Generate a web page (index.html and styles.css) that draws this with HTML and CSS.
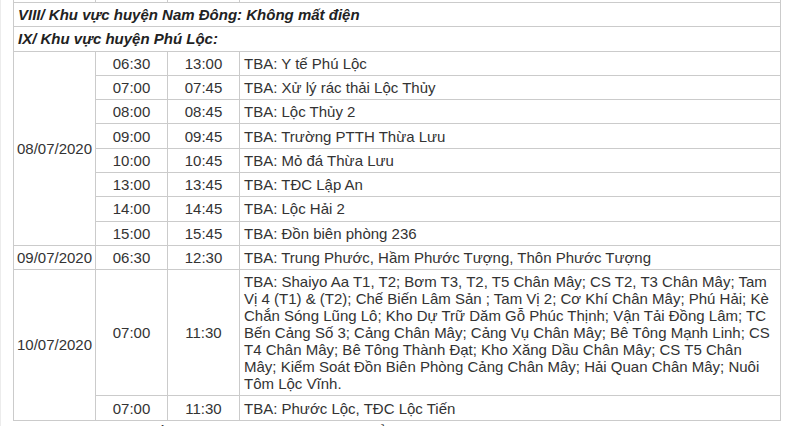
FILE: index.html
```html
<!DOCTYPE html>
<html lang="vi">
<head>
<meta charset="utf-8">
<title>Lịch cắt điện</title>
<link rel="stylesheet" href="styles.css">
</head>
<body>
<div class="page">
  <table class="sched">
    <colgroup>
      <col class="c-date">
      <col class="c-start">
      <col class="c-end">
      <col class="c-place">
    </colgroup>
    <tbody>
      <tr class="stub"><td></td><td></td><td></td><td></td></tr>
      <tr><td colspan="4" class="section">VIII/ Khu vực huyện Nam Đông: Không mất điện</td></tr>
      <tr><td colspan="4" class="section">IX/ Khu vực huyện Phú Lộc:</td></tr>
      <tr><td rowspan="8" class="date">08/07/2020</td><td class="time">06:30</td><td class="time">13:00</td><td>TBA: Y tế Phú Lộc</td></tr>
      <tr><td class="time">07:00</td><td class="time">07:45</td><td>TBA: Xử lý rác thải Lộc Thủy</td></tr>
      <tr><td class="time">08:00</td><td class="time">08:45</td><td>TBA: Lộc Thủy 2</td></tr>
      <tr><td class="time">09:00</td><td class="time">09:45</td><td>TBA: Trường PTTH Thừa Lưu</td></tr>
      <tr><td class="time">10:00</td><td class="time">10:45</td><td>TBA: Mỏ đá Thừa Lưu</td></tr>
      <tr><td class="time">13:00</td><td class="time">13:45</td><td>TBA: TĐC Lập An</td></tr>
      <tr><td class="time">14:00</td><td class="time">14:45</td><td>TBA: Lộc Hải 2</td></tr>
      <tr><td class="time">15:00</td><td class="time">15:45</td><td>TBA: Đồn biên phòng 236</td></tr>
      <tr><td class="date">09/07/2020</td><td class="time">06:30</td><td class="time">12:30</td><td>TBA: Trung Phước, Hầm Phước Tượng, Thôn Phước Tượng</td></tr>
      <tr><td rowspan="2" class="date">10/07/2020</td><td class="time">07:00</td><td class="time">11:30</td><td>TBA: Shaiyo Aa T1, T2; Bơm T3, T2, T5 Chân Mây; CS T2, T3 Chân Mây; Tam Vị 4 (T1) &amp; (T2); Chế Biến Lâm Sản ; Tam Vị 2; Cơ Khí Chân Mây; Phú Hải; Kè Chắn Sóng Lũng Lô; Kho Dự Trữ Dăm Gỗ Phúc Thịnh; Vận Tải Đồng Lâm; TC Bến Cảng Số 3; Cảng Chân Mây; Cảng Vụ Chân Mây; Bê Tông Mạnh Linh; CS T4 Chân Mây; Bê Tông Thành Đạt; Kho Xăng Dầu Chân Mây; CS T5 Chân Mây; Kiểm Soát Đồn Biên Phòng Cảng Chân Mây; Hải Quan Chân Mây; Nuôi Tôm Lộc Vĩnh.</td></tr>
      <tr><td class="time">07:00</td><td class="time">11:30</td><td>TBA: Phước Lộc, TĐC Lộc Tiến</td></tr>
    </tbody>
  </table>
  <p class="note">Thông tin chi tiết khách hàng vui lòng liên hệ tổng đài chăm sóc khách hàng 19001909</p>
</div>
</body>
</html>
```

FILE: styles.css
```css
html, body {
  margin: 0;
  padding: 0;
  background: #ffffff;
}

.page {
  padding-left: 13px;
  border-left: 1px solid #ececec;
  font-family: "Liberation Sans", Arial, sans-serif;
  color: #333333;
}

.sched {
  width: 768px;
  margin-left: -1px;
  border-collapse: collapse;
  table-layout: fixed;
  font-size: 15px;
  line-height: 17px;
}

.c-date { width: 82px; }
.c-start { width: 72px; }
.c-end { width: 72px; }

.sched td {
  border: 1px solid #cbcbcb;
  padding: 3.15px 4px;
  vertical-align: middle;
}

.sched .stub td {
  border-top: 0;
  padding: 0;
  height: 2px;
}

.sched td.section {
  font-weight: bold;
  font-style: italic;
  color: #222222;
}

.sched td.date,
.sched td.time {
  text-align: center;
  padding-left: 2px;
  padding-right: 2px;
}

.note {
  margin: 2px 0 0 37px;
  font-size: 16px;
  line-height: 20px;
}
```
